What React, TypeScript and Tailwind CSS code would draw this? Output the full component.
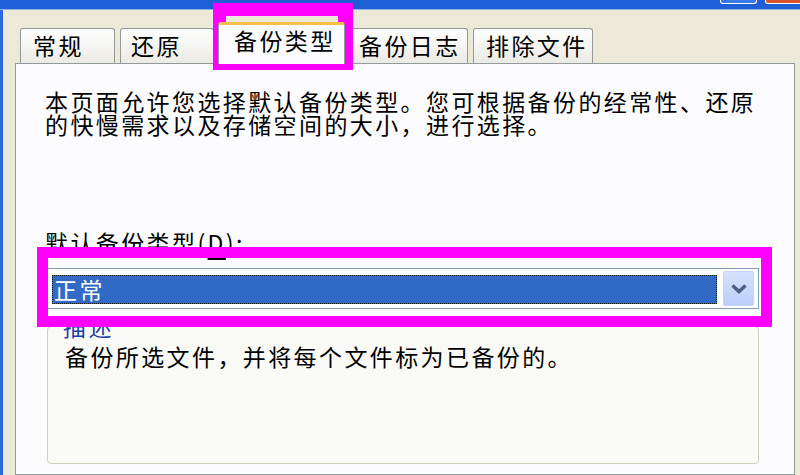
const tabs = [
  { label: '常规', cls: 'ml-[5px] w-[95px] pl-[12px]' },
  { label: '还原', cls: 'ml-[5px] w-[94px] pl-[10px]' },
  { label: '备份类型', cls: 'ml-[4px] w-[127px] pl-[15px]', active: true },
  { label: '备份日志', cls: 'ml-[1px] w-[122px] pl-[12px]' },
  { label: '排除文件', cls: 'ml-[5px] w-[120px] pl-[12px]' },
]

function TitleBar() {
  return (
    <div className="h-[10px] shrink-0 flex items-start justify-end bg-[#1f5fd6] border-b border-[#8fb0ec]">
      <div className="w-[37px] h-[4px] bg-[#3a78ea] border border-t-0 border-white rounded-b-[3px] mr-[8px]" />
      <div className="w-[35px] h-[4px] bg-[#d8542c] border border-t-0 border-r-0 border-white rounded-bl-[3px]" />
    </div>
  )
}

function Tab({ label, cls, active }: { label: string; cls: string; active?: boolean }) {
  if (active) {
    return (
      <div
        className={`${cls} relative z-10 -mb-px h-[42px] shrink-0 pt-[4px] bg-[#fcfcfe] border-x border-[#919b9c] border-t-[3px] border-t-[#f5c04a] rounded-t-[3px]`}
      >
        {label}
      </div>
    )
  }
  return (
    <div
      className={`${cls} h-[35px] shrink-0 pt-[5px] bg-gradient-to-b from-white to-[#ebeae4] border border-b-0 border-[#919b9c] rounded-t-[3px]`}
    >
      {label}
    </div>
  )
}

function Combo() {
  return (
    <div className="mt-[14px] ml-[31px] w-[712px] h-[41px] flex items-center bg-white border border-[#7f9db9]">
      <div className="ml-[4px] mt-[2px] flex-1 h-[29px] flex items-center bg-[#316ac5] border border-dotted border-[#1a1a1a] text-white pl-[1px]">
        正常
      </div>
      <div className="ml-[6px] mr-[4px] w-[31px] h-[35px] flex items-center justify-center rounded-[2px] bg-gradient-to-b from-[#d6e2fd] to-[#bccefa] border border-[#c6d6fb]">
        <svg width="18" height="11" viewBox="0 0 18 11">
          <path d="M2.5 2.5 L9 8.5 L15.5 2.5" fill="none" stroke="#4d6185" strokeWidth="3.5" />
        </svg>
      </div>
    </div>
  )
}

export default function App() {
  return (
    <div className="relative w-[800px] h-[475px] overflow-hidden flex flex-col bg-[#ece9d8] text-black text-[23px] leading-[23px] tracking-[2.4px] font-['Noto_Sans_CJK_SC',sans-serif]">
      <TitleBar />
      <div className="flex-1 flex border-l-[3px] border-[#2d6ae0]">
        <div className="flex-1 flex flex-col pl-[12px] pr-[5px] pt-[12px]">
          <div className="h-[41px] flex items-end shrink-0">
            {tabs.map((t) => (
              <Tab key={t.label} {...t} />
            ))}
          </div>

          <div className="flex-1 flex flex-col bg-[#fcfcfe] border border-[#919b9c] pt-[26px]">
            <p className="pl-[29px] whitespace-nowrap">
              本页面允许您选择默认备份类型。您可根据备份的经常性、还原
              <br />
              的快慢需求以及存储空间的大小，进行选择。
            </p>

            <div className="mt-[95px] pl-[29px] whitespace-nowrap">
              默认备份类型(<span className="underline decoration-2 underline-offset-[6px]">D</span>):
            </div>

            <Combo />

            <fieldset className="mt-[6px] ml-[31px] w-[712px] h-[149px] pl-[14px] border border-[#d0d0bf] rounded-[4px] bg-[#fafaf6]">
              <legend className="text-[#1f3fa8] px-[1px]">描述</legend>
              <div className="pt-[7px] pl-[3px] whitespace-nowrap">
                备份所选文件，并将每个文件标为已备份的。
              </div>
            </fieldset>
          </div>
        </div>
      </div>

      {/* annotation frames */}
      <div className="absolute left-[213px] top-[3px] w-[140px] h-[67px] border-[13px] border-r-[15px] border-[#ff00ff]" />
      <div className="absolute left-[37px] top-[247px] w-[735px] h-[80px] border-[11px] border-[#ff00ff]" />
    </div>
  )
}
